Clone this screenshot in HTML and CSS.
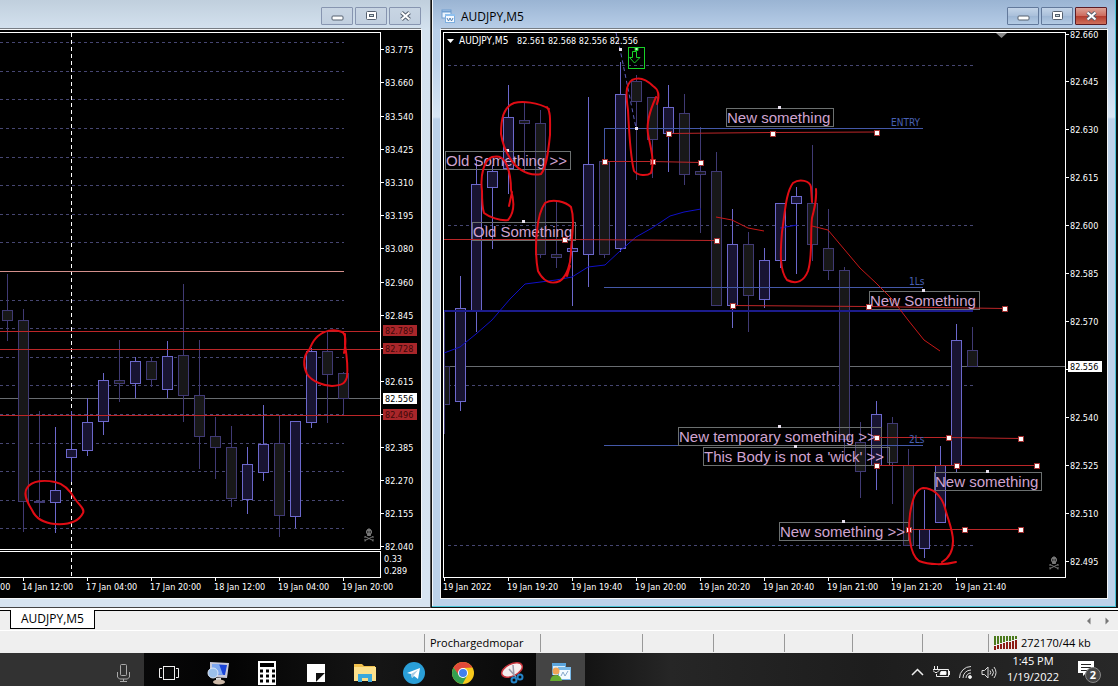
FILE: index.html
```html
<!DOCTYPE html>
<html lang="en">
<head>
<meta charset="utf-8">
<title>AUDJPY,M5</title>
<link rel="stylesheet" href="styles.css">
</head>
<body>
<svg class="defs" aria-hidden="true">
  <defs>
    <g id="skull" fill="none" stroke="#777">
      <path fill="#777" d="M-2.500 -1v-2l1.500-2h2l1.500 2v2l-1 1v1.500h-3v-1.500z"/>
      <path stroke="#000" d="M-2 -2h1.500M.5 -2h1.500"/>
      <path d="M-4 2.500l8 4M4 2.500l-8 4M-4 4v-2M4 4v-2M-4 5v2.500M4 5v2.500"/>
    </g>
    <rect id="grip" x="-2" y="-2" width="5" height="5" fill="#fff" stroke="#a03030"/>
    <rect id="dot" x="-1" y="-1" width="3" height="3" fill="#e8e0ee"/>
    <g id="ic-min"><rect x="6" y="8" width="11" height="4" rx="1" fill="#fff" stroke="#55606f"/></g>
    <g id="ic-max"><rect x="6.500" y="3.500" width="10" height="8" rx="1" fill="#fff" stroke="#55606f"/><rect x="9.500" y="6.500" width="4" height="2" fill="#cdd" stroke="#55606f"/></g>
    <g id="ic-close"><path d="M7.500 4.500l8 7M15.500 4.500l-8 7" stroke="#55606f" stroke-width="4"/><path d="M7.500 4.500l8 7M15.500 4.500l-8 7" stroke="#fff" stroke-width="2"/></g>
  </defs>
</svg>

<main class="workspace">
  <section class="window inactive" aria-label="Chart, 4 hours">
    <header class="titlebar">
      <button class="ctl" aria-label="Minimize"><svg width="23" height="15"><use href="#ic-min"/></svg></button>
      <button class="ctl" aria-label="Maximize"><svg width="23" height="15"><use href="#ic-max"/></svg></button>
      <button class="ctl" aria-label="Close"><svg width="23" height="15"><use href="#ic-close"/></svg></button>
    </header>
    <svg class="chart" viewBox="0 30 421 568">
      <g class="crisp">
        <path class="grid" d="M0 42.500H344M0 71.500H344M0 99.500H344M0 128.500H344M0 157.500H344M0 185.500H344M0 214.500H344M0 242.500H344M0 300.500H344M0 328.500H344M0 357.500H344M0 385.500H344M0 414.500H344M0 443.500H344M0 471.500H344M0 500.500H344M0 528.500H344"/>
        <path class="session" d="M71.500 33V576"/>
        <path class="daily" d="M0 271.500H344"/>
        <path class="price" d="M0 398.500H380"/>
        <path class="down" d="M7.500 274V341M23.500 309V532M39.500 411V517M119.500 340V402M151.500 357V387M183.500 284V422M199.500 340V469M215.500 417V479M231.500 426V507M279.500 416V537M327.500 332V423M343.500 372V415"/>
        <path class="down" d="M2.500 310.500h10v10h-10zM18.500 320.500h10v181h-10zM34.500 501.500h10v1h-10zM114.500 380.500h10v3h-10zM146.500 361.500h10v18h-10zM178.500 355.500h10v40h-10zM194.500 395.500h10v41h-10zM210.500 436.500h10v11h-10zM226.500 447.500h10v51h-10zM274.500 443.500h10v72h-10zM322.500 351.500h10v23h-10zM338.500 373.500h10v25h-10z"/>
        <path class="up" d="M55.500 427V533M71.500 411V482M87.500 398V456M103.500 373V435M135.500 357V398M167.500 341V398M247.500 447V514M263.500 405V481M295.500 421V528M311.500 348V428"/>
        <path class="up" d="M50.500 490.500h10v12h-10zM66.500 449.500h10v8h-10zM82.500 422.500h10v28h-10zM98.500 380.500h10v41h-10zM130.500 361.500h10v22h-10zM162.500 356.500h10v33h-10zM242.500 464.500h10v35h-10zM258.500 444.500h10v28h-10zM290.500 421.500h10v95h-10zM306.500 351.500h10v71h-10z"/>
        <path class="level" d="M0 331.500H380M0 349.500H380M0 415.500H380"/>
        <path class="frame" d="M0 32.500H380.500V549.500H0M0 551.500H380.500V577.500H0"/>
        <path class="frame" d="M381 49.500h3M381 82.500h3M381 116.500h3M381 149.500h3M381 182.500h3M381 215.500h3M381 248.500h3M381 282.500h3M381 315.500h3M381 348.500h3M381 381.500h3M381 414.500h3M381 447.500h3M381 480.500h3M381 513.500h3M381 546.500h3M23.500 578v3M87.500 578v3M151.500 578v3M215.500 578v3M279.500 578v3M343.500 578v3"/>
        <path fill="#a8262a" d="M383 325h34v11h-34zM383 343h34v11h-34zM383 409h34v11h-34z"/>
        <path fill="#fff" d="M383 393h34v11h-34z"/>
      </g>
      <g class="axis">
        <text x="385" y="53">83.775</text><text x="385" y="86">83.660</text><text x="385" y="120">83.540</text><text x="385" y="153">83.425</text><text x="385" y="186">83.310</text><text x="385" y="219">83.195</text><text x="385" y="252">83.080</text><text x="385" y="286">82.960</text><text x="385" y="319">82.845</text><text x="385" y="385">82.615</text><text x="385" y="451">82.385</text><text x="385" y="484">82.270</text><text x="385" y="517">82.155</text><text x="385" y="550">82.040</text><text x="384" y="562">0.33</text><text x="384" y="574">0.289</text>
        <text class="on-red" x="385" y="334">82.789</text><text class="on-red" x="385" y="352">82.728</text><text class="on-red" x="385" y="418">82.496</text><text class="on-white" x="385" y="402">82.556</text>
        <text x="0" y="590">00</text><text x="22" y="590">14 Jan 12:00</text><text x="86" y="590">17 Jan 04:00</text><text x="150" y="590">17 Jan 20:00</text><text x="214" y="590">18 Jan 12:00</text><text x="278" y="590">19 Jan 04:00</text><text x="342" y="590">19 Jan 20:00</text>
      </g>
      <use href="#skull" x="369" y="534"/>
      <g class="marker">
        <path d="M27 488C32 480 45 480 55 482C65 484 71 492 75 499C80 506 85 509 83 513C79 521 70 525 55 524C43 523 36 519 32 510C27 502 23 494 27 488Z"/>
        <path d="M344 353C346 343 346 334 342 332C333 328 324 331 318 336C312 341 311 347 309 350C303 356 303 366 307 374C312 382 325 386 332 386C342 385 345 384 347 377C348 368 347 357 345 345V334"/>
      </g>
    </svg>
  </section>

  <section class="window active" aria-label="AUDJPY,M5">
    <header class="titlebar">
      <svg class="app-icon" width="15" height="14"><rect x="1" y="1" width="9" height="8" fill="#eaf3fc" stroke="#6f9ed0"/><path d="M1 2.500h9" stroke="#6f9ed0" stroke-width="2"/><rect x="4.500" y="5.500" width="9" height="8" fill="#f6faff" stroke="#7caee0"/><path d="M4 6h10" stroke="#8fc0ee" stroke-width="2"/><path d="M6 9l1.500 3 1.500-3 1.500 3 1.500-3" fill="none" stroke="#5482b5"/></svg>
      <h1 class="title">AUDJPY,M5</h1>
      <button class="ctl" aria-label="Minimize"><svg width="23" height="15"><use href="#ic-min"/></svg></button>
      <button class="ctl" aria-label="Maximize"><svg width="23" height="15"><use href="#ic-max"/></svg></button>
      <button class="ctl close" aria-label="Close"><svg width="23" height="15"><use href="#ic-close"/></svg></button>
    </header>
    <svg class="chart" viewBox="441 30 666 568">
      <g class="crisp">
        <path class="grid" d="M448 65.500H974M448 225.500H974M448 385.500H974M448 545.500H974"/>
        <path class="price" d="M444 366.500H1065"/>
        <path class="down" d="M444.500 310V434M524.500 103V172M540.500 110V258M556.500 202V268M604.500 160V258M636.500 75V180M652.500 97V178M684.500 94V185M700.500 127V233M716.500 152V305M748.500 232V332M812.500 145V261M828.500 209V280M844.500 267V460M860.500 422V498M892.500 417V504M908.500 449V545M972.500 327V366"/>
        <path class="down" d="M444.500 366.500h5v38h-5zM519.500 120.500h10v3h-10zM535.500 123.500h10v131h-10zM551.500 254.500h10v3h-10zM599.500 161.500h10v93h-10zM631.500 81.500h10v20h-10zM647.500 97.500h10v42h-10zM679.500 113.500h10v61h-10zM695.500 171.500h10v3h-10zM711.500 171.500h10v134h-10zM743.500 244.500h10v51h-10zM807.500 203.500h10v41h-10zM823.500 248.500h10v22h-10zM839.500 270.500h10v169h-10zM855.500 442.500h10v29h-10zM887.500 423.500h10v39h-10zM903.500 465.500h10v80h-10zM967.500 350.500h10v16h-10z"/>
        <path class="up" d="M460.500 276V411M476.500 160V332M492.500 165V249M508.500 85V194M572.500 237V306M588.500 97V287M620.500 62V252M668.500 85V172M732.500 209V328M764.500 248V308M780.500 203V268M796.500 187V274M876.500 401V490M924.500 490V558M940.500 446V522M956.500 324V472"/>
        <path class="up" d="M455.500 308.500h10v93h-10zM471.500 184.500h10v126h-10zM487.500 171.500h10v16h-10zM503.500 117.500h10v51h-10zM567.500 248.500h10v3h-10zM583.500 164.500h10v90h-10zM615.500 94.500h10v154h-10zM663.500 107.500h10v26h-10zM727.500 244.500h10v61h-10zM759.500 260.500h10v39h-10zM775.500 203.500h10v57h-10zM791.500 196.500h10v7h-10zM871.500 414.500h10v51h-10zM919.500 529.500h10v19h-10zM935.500 465.500h10v57h-10zM951.500 340.500h10v125h-10z"/>
        <path class="navy" d="M444 310H973V312H444Z"/>
        <path class="target" d="M604.500 161V128.500H923M604 287.500H923M604 445.500H923"/>
        <path class="frame" d="M443.500 32.500H1065.500V577.500H443.500ZM1066 34.500h3M1066 81.500h3M1066 129.500h3M1066 177.500h3M1066 225.500h3M1066 273.500h3M1066 321.500h3M1066 369.500h3M1066 417.500h3M1066 465.500h3M1066 513.500h3M1066 561.500h3M444.500 578v3M508.500 578v3M572.500 578v3M636.500 578v3M700.500 578v3M764.500 578v3M828.500 578v3M892.500 578v3M956.500 578v3"/>
        <path class="tag" d="M445.500 151.500h125v18h-125zM472.500 222.500h103v18h-103zM726.500 108.500h107v18h-107zM869.500 291.500h110v18h-110zM678.500 427.500h203v18h-203zM703.500 447.500h186v18h-186zM934.500 472.500h107v18h-107zM779.500 522.500h129v18h-129z"/>
        <path fill="#fff" d="M1068 361h34v11h-34z"/>
      </g>
      <path class="ma" stroke="#1010c8" d="M444 353L460 347L476 334L492 320L510 299L525 284L556 280L572 277L588 267L605 265L620 251L636 237L652 228L670 216L684 212L701 209M780 228L797 225"/>
      <path class="ma" stroke="#c81818" d="M716 217L732 220L748 228L764 231M812 226L828 230L844 249L860 268L876 283L892 299L908 320L924 340L940 351"/>
      <path class="ma" stroke="#5a5ab8" stroke-dasharray="4 3" d="M616 33L620 49L636 128"/>
      <g class="level">
        <path d="M604 161.500H652L701 162.500M668 133.500L772 132.500L876 132M444 239.500H564L716 240.500M732 305.500L868 306.500L1005 308.500M876 437.500H948L1021 438.500M876 465.500H1037M908 529.500H1021"/>
      </g>
      <g class="crisp">
        <use href="#grip" x="604" y="161"/><use href="#grip" x="652" y="161"/><use href="#grip" x="700" y="162"/><use href="#grip" x="668" y="133"/><use href="#grip" x="772" y="133"/><use href="#grip" x="876" y="132"/><use href="#grip" x="564" y="239"/><use href="#grip" x="716" y="240"/><use href="#grip" x="732" y="305"/><use href="#grip" x="868" y="306"/><use href="#grip" x="1004" y="308"/><use href="#grip" x="876" y="437"/><use href="#grip" x="948" y="437"/><use href="#grip" x="1020" y="438"/><use href="#grip" x="876" y="465"/><use href="#grip" x="956" y="465"/><use href="#grip" x="1036" y="465"/><use href="#grip" x="908" y="529"/><use href="#grip" x="964" y="529"/><use href="#grip" x="1020" y="529"/>
        <use href="#dot" x="507" y="150"/><use href="#dot" x="523" y="221"/><use href="#dot" x="779" y="107"/><use href="#dot" x="923" y="290"/><use href="#dot" x="779" y="426"/><use href="#dot" x="795" y="446"/><use href="#dot" x="987" y="471"/><use href="#dot" x="843" y="521"/><use href="#dot" x="620" y="49"/><use href="#dot" x="636" y="128"/>
      </g>
      <g fill="none" stroke="#18d028"><rect x="628.500" y="47.500" width="16" height="21"/><path d="M632.500 51.500h4v6h3.500l-5.500 5.500-5-5.500h3z"/><path fill="#cfc" d="M635 47.500h3v3h-3z"/></g>
      <path fill="#888" d="M996 33h11l-5.500 5z"/>
      <path fill="#fff" d="M447 39h7l-3.500 4z"/>
      <g class="axis">
        <text class="symbol" x="459" y="44">AUDJPY,M5</text><text x="517" y="44">82.561 82.568 82.556 82.556</text>
        <text x="1070" y="38">82.660</text><text x="1070" y="85">82.645</text><text x="1070" y="133">82.630</text><text x="1070" y="181">82.615</text><text x="1070" y="229">82.600</text><text x="1070" y="277">82.585</text><text x="1070" y="325">82.570</text><text class="on-white" x="1070" y="370">82.556</text><text x="1070" y="421">82.540</text><text x="1070" y="469">82.525</text><text x="1070" y="517">82.510</text><text x="1070" y="565">82.495</text>
        <text x="443" y="590">19 Jan 2022</text><text x="507" y="590">19 Jan 19:20</text><text x="571" y="590">19 Jan 19:40</text><text x="635" y="590">19 Jan 20:00</text><text x="699" y="590">19 Jan 20:20</text><text x="763" y="590">19 Jan 20:40</text><text x="827" y="590">19 Jan 21:00</text><text x="891" y="590">19 Jan 21:20</text><text x="955" y="590">19 Jan 21:40</text>
        <text class="on-target" x="891" y="126">ENTRY</text><text class="on-target" x="909" y="285">1Ls</text><text class="on-target" x="909" y="443">2Ls</text>
      </g>
      <g class="note">
        <text x="446" y="166">Old Something &gt;&gt;</text><text x="473" y="237">Old Something</text><text x="727" y="123">New something</text><text x="870" y="306">New Something</text><text x="679" y="442">New temporary something &gt;&gt;</text><text x="704" y="462">This Body is not a 'wick' &gt;&gt;</text><text x="935" y="487">New something</text><text x="780" y="537">New something &gt;&gt;</text>
      </g>
      <use href="#skull" x="1054" y="562"/>
      <g class="marker">
        <path d="M549 109C538 102 522 101 514 103C503 107 501 120 501 134C503 147 509 158 515 165C523 173 533 176 541 174C546 168 548 155 550 135C550 122 551 112 547 107"/>
        <path d="M482 191C480 175 484 160 492 157C500 155 504 158 507 166C511 175 511 183 511 190C514 200 515 212 508 220C500 221 489 217 484 213C482 207 482 199 482 191ZM512 192L509 206"/>
        <path d="M545 203C553 198 566 202 571 207C575 220 572 234 571 250C571 264 567 276 560 281C551 285 543 281 538 271C535 255 536 240 537 231C538 220 540 210 545 203ZM570 266L567 276"/>
        <path d="M657 104C660 95 658 89 653 86C645 78 638 77 632 80C625 85 626 96 628 110C629 130 630 155 634 171C638 176 647 176 651 173C655 160 650 145 648 134C646 122 651 108 656 97"/>
        <path d="M816 189C817 202 814 209 812 218C810 236 813 255 808 271C804 281 797 285 787 280C780 271 780 255 782 232C785 212 786 192 793 183C800 178 810 181 811 187L812 202"/>
        <path d="M956 562C945 565 929 565 919 561C909 554 908 530 910 514C912 500 916 489 923 488C932 488 941 494 945 508C948 520 953 530 953 541C953 552 949 558 942 562"/>
      </g>
    </svg>
  </section>
</main>

<nav class="tabs">
  <a class="tab" href="#">AUDJPY,M5</a>
  <span class="arrows"><button aria-label="Scroll tabs left"><svg width="5" height="8"><path d="M4.500 0.500v7L1 4z"/></svg></button><button aria-label="Scroll tabs right"><svg width="5" height="8"><path d="M.5.5v7L4 4z"/></svg></button></span>
</nav>

<footer class="status">
  <span></span><span class="cell">Prochargedmopar</span><span class="cell"></span><span class="cell"></span><span class="cell"></span><span class="cell"></span><span class="cell"></span><span class="cell blank"></span>
  <span class="cell traffic"><svg width="24" height="14"><path stroke="#4c7a1c" stroke-width="2" d="M1 0v9M4 0v8M7 0v7M10 0v6M13 0v5M16 0v5M19 0v4M22 0v3"/><path stroke="#8c1c14" stroke-width="2" d="M1 10v4M4 9v4M7 8v5M10 7v6M13 6v7M16 6v7M19 5v8M22 4v9"/></svg>272170/44 kb</span>
</footer>

<div class="taskbar">
  <button class="search" aria-label="Voice search"><svg width="13" height="18" fill="none" stroke="#aaa"><rect x="3.500" y=".5" width="6" height="11" rx="1"/><path d="M.5 8v5l2 2h8l2-2V8M6.500 15v2M3 17.500h7"/></svg></button>
  <button class="app" aria-label="Task view"><svg width="22" height="22" fill="none" stroke="#eee"><rect x="5.500" y="4.500" width="11" height="13"/><path d="M4 6.500H1.500v9H4M18 6.500h2.500v9H18"/></svg></button>
  <button class="app" aria-label="Remote desktop"><svg width="24" height="24"><path d="M4 1l19 1-2 15-17-1z" fill="#c8c8d8"/><path d="M6 3l15 1-2 10-13-1z" fill="#1a44d8"/><path d="M6 3l7 0 4 11-11-1z" fill="#7fa8f0"/><circle cx="7" cy="12" r="5" fill="#9cc0ea" stroke="#dce8f8"/><path d="M10 17h5v3H10z" fill="#ddd"/><ellipse cx="13" cy="21" rx="6" ry="2.500" fill="#cdb9a8"/></svg></button>
  <button class="app" aria-label="Calculator"><svg width="18" height="24"><path fill="#fff" d="M0 0h18v24H0z"/><path d="M2 2h14v4H2z"/><path stroke="#000" stroke-width="3" stroke-dasharray="3 3" d="M2 10h15M2 15h15M2 20h15"/></svg></button>
  <button class="app" aria-label="Sticky notes"><svg width="18" height="18"><path fill="#fff" d="M0 0h18v9l-9 9H0z"/><path fill="#111" d="M9 18V9h9z"/><path fill="#fff" d="M18 9v9H9z"/><path fill="#111" d="M9 9h8L9 17z"/></svg></button>
  <button class="app" aria-label="File explorer"><svg width="22" height="20"><path fill="#f0c04c" d="M0 1h8l2 2h11v15H0z"/><path fill="#fbe08c" d="M0 4h22v14H0z"/><path fill="#3aa8dc" d="M4 19v-8h14v8h-4v-4H8v4z"/></svg></button>
  <button class="app" aria-label="Telegram"><svg width="22" height="22"><circle cx="11" cy="11" r="11" fill="#2a9fd8"/><path fill="#fff" d="M4 11l13-5-2 11-4-3-2 2-1-4z"/><path fill="#a8cce4" d="M8 12l7-4-4 5-2 3z"/></svg></button>
  <button class="app" aria-label="Chrome"><svg width="22" height="22"><circle cx="11" cy="11" r="11" fill="#f7c91c"/><path fill="#e04a3a" d="M1.500 5.500a11 11 0 0 1 19 0L11 6l-4 8z"/><path fill="#34a050" d="M1.500 5.500a11 11 0 0 0 9 16.500l5-9-8 1z"/><circle cx="11" cy="11" r="5" fill="#fff"/><circle cx="11" cy="11" r="4" fill="#3f7fec"/></svg></button>
  <button class="app" aria-label="Snipping tool"><svg width="24" height="22"><ellipse cx="12" cy="8" rx="11" ry="6" fill="#f4eeee" stroke="#c8343c" stroke-width="1.500" transform="rotate(-25 12 8)"/><path d="M9 7l7 8M13 3l1 11" stroke="#99a" stroke-width="1.500"/><g fill="none" stroke="#2484c8" stroke-width="2"><circle cx="14" cy="18" r="2.500"/><circle cx="20" cy="15" r="2.500"/></g></svg></button>
  <button class="app current" aria-label="MetaTrader"><svg width="22" height="22"><path fill="#5ba4dc" d="M2 1h14v12H2z"/><path fill="#d8ecfa" d="M3 4h12v9H3z"/><path fill="#78b8e8" d="M8 5h13v13H8z"/><path fill="#f4faff" d="M9 8h11v9H9z"/><path d="M11 14l2-4 2 4 3-5" fill="none" stroke="#8ac"/><circle cx="6" cy="9" r="3.500" fill="#f0a458"/><path fill="#68ac30" d="M0 19q1-6 6-6t6 6z"/></svg></button>
  <div class="tray">
    <button aria-label="Show hidden icons"><svg width="13" height="8" fill="none" stroke="#eee" stroke-width="1.500"><path d="M1 7l5.500-5.500L12 7"/></svg></button>
    <svg width="17" height="12" fill="none" stroke="#eee"><path d="M5 3.500h10.500v7H3.500V8M1.500 0v3M4.500 0v3M0 3.500h6v1l-2 2H2l-2-2zM16.500 5v4"/><path fill="#fff" d="M8 5.500h5v3H7z"/></svg>
    <svg width="13" height="13" fill="none" stroke="#ddd"><path d="M.5 12A11.500 11.500 0 0 1 12 .5M4 12A8 8 0 0 1 12 4M7 12a5 5 0 0 1 5-5"/><circle cx="11" cy="11" r="1.500" fill="#fff"/></svg>
    <svg width="16" height="13" fill="none" stroke="#ddd"><path d="M1 4.500h2.500L7 1v11L3.500 8.500H1zM9 4.500q1.500 2 0 4M11 3q3 3.500 0 7M13 1q4 5.500 0 11"/></svg>
    <p class="clock"><time>1:45 PM</time><time>1/19/2022</time></p>
    <button class="notify" aria-label="Notifications"><svg width="24" height="24"><path fill="#fff" d="M0 1h16v12H8l-3 3v-3H0z"/><path stroke="#222" d="M3 4.500h10M3 7.500h10M3 10.500h6"/><circle cx="15" cy="15" r="7.500" fill="#444" stroke="#888"/><text x="15" y="19" text-anchor="middle" fill="#fff">2</text></svg></button>
  </div>
</div>
</body>
</html>
```
FILE: styles.css
```css
* { box-sizing: border-box; }
body {
  margin: 0;
  height: 100vh;
  overflow: hidden;
  display: flex;
  flex-direction: column;
  background: #efefef;
  color: #000;
  font-family: "Open Sans", "Noto Sans", sans-serif;
  font-size: 12px;
}
button { border: 0; padding: 0; background: none; font: inherit; color: inherit; }
svg { display: block; }
.defs { position: absolute; width: 0; height: 0; }

/* chart windows */
.workspace {
  flex: none;
  display: grid;
  grid-template-columns: 431fr 687fr;
  border-bottom: 2px solid #fff;
}
.window { border-bottom: 1px solid #444; }
.inactive {
  padding: 0 9px 9px 0;
  border-right: 1px solid #555;
  background: linear-gradient(#c0cfdd, #d4e2ef 30px, #d7e4f1);
}
.active {
  padding: 0 9px 9px;
  border: 1px solid #111;
  border-top: 0;
  border-right-width: 2px;
  box-shadow: inset -1px -1px #49c4d8, inset 1px 0 #f4f8fc;
  background: linear-gradient(#9ab4d3, #b9cfe9 30px, #bcd2ea 60px, #d8e6f4 117px, #bcd2ea 119px);
}
.titlebar {
  height: 30px;
  display: flex;
  align-items: flex-start;
  gap: 2px;
  padding-top: 7px;
  justify-content: flex-end;
  border-bottom: 2px solid #777d84;
}
.app-icon { margin: 2px 3px 0 0; }
.title { flex: 1; margin: 0; font-size: 12px; font-weight: 400; line-height: 20px; }
.ctl {
  width: 32px;
  height: 18px;
  display: flex;
  justify-content: center;
  border: 1px solid #8795b0;
  border-radius: 1px;
  background: linear-gradient(#c8d5e3, #c1cfdf);
}
.active .ctl { border-color: #62799b; background: linear-gradient(#c3d4e8, #a9bfda 50%, #9db6d4 50%, #b4cbe4); }
.active .close { border-color: #5c1c24; background: linear-gradient(#dca296, #cd6a5c 50%, #b23a2c 50%, #cf705c); }
.chart { width: 100%; height: auto; background: #000; outline: 1px solid #f4f6f8; }
.chart path { stroke-width: 1px; }
.crisp { shape-rendering: crispEdges; }
.grid { stroke: #464672; stroke-dasharray: 3 3; fill: none; }
.session { stroke: #fff; stroke-dasharray: 4 3; }
.daily { stroke: #d4908c; }
.price { stroke: #686c70; }
.level { stroke: #bc2628; fill: none; }
.navy { fill: #1c1c8c; }
.target { stroke: #4458a8; fill: none; }
.frame { stroke: #fff; fill: none; }
.up { stroke: #6c68cc; fill: #181432; }
.down { stroke: #403a74; fill: #181819; }
.tag { stroke: #6c7070; fill: none; }
.ma { fill: none; }
.chart .marker path { fill: none; stroke: #e00c14; stroke-width: 2px; stroke-linecap: round; }
.axis { font: 9px "DejaVu Sans Condensed", "DejaVu Sans", sans-serif; fill: #fff; }
.on-red { fill: #3c0808; }
.on-white { fill: #000; }
.symbol { font-size: 10px; }
.on-target { font-size: 10px; fill: #4860b4; }
.note { font: 15px "Liberation Sans", Arial, sans-serif; fill: #d0a4d0; }

/* chart tabs */
.tabs {
  flex: none;
  height: 21px;
  display: flex;
  justify-content: space-between;
  padding: 0 8px 0 10px;
  border-top: 1px solid #000;
  border-bottom: 1px solid #fff;
}
.tab {
  height: 19px;
  margin-top: -1px;
  padding: 0 10px;
  border: 1px solid #000;
  border-top: 0;
  background: #fff;
  color: #000;
  line-height: 18px;
  text-decoration: none;
}
.arrows { display: flex; gap: 14px; align-items: center; fill: #777; }

/* status bar */
.status {
  flex: none;
  height: 22px;
  padding: 3px 0 1px;
  display: grid;
  grid-template-columns: 424fr 116fr 102fr 71fr 71fr 68fr 70fr 66fr 130fr;
  font-size: 11px;
}
.cell { border-left: 1px solid #999; padding-left: 5px; line-height: 18px; white-space: nowrap; }
.traffic { display: flex; align-items: center; gap: 3px; }

/* taskbar */
.taskbar {
  flex: 1;
  min-height: 0;
  overflow: hidden;
  display: flex;
  align-items: flex-start;
  background: linear-gradient(90deg, #101112, #030303 20%, #151515 34%, #090909 48%, #262626 60%, #1d1d1d 78%, #282828);
}
.taskbar > button { height: 40px; display: flex; align-items: center; justify-content: center; }
.search { width: 144px; background: #323232; }
.taskbar > .search { justify-content: flex-end; padding-right: 14px; }
.app { width: 49px; }
.current { background: #444; }
.tray { flex: 1; height: 38px; display: flex; justify-content: flex-end; align-items: center; gap: 9px; padding-right: 16px; }
.clock { margin: 0; padding-bottom: 6px; width: 54px; color: #fff; font-size: 11px; line-height: 16px; text-align: center; }
.clock time { display: block; }
.notify { margin-left: 9px; font-size: 11px; font-weight: 700; }
```
